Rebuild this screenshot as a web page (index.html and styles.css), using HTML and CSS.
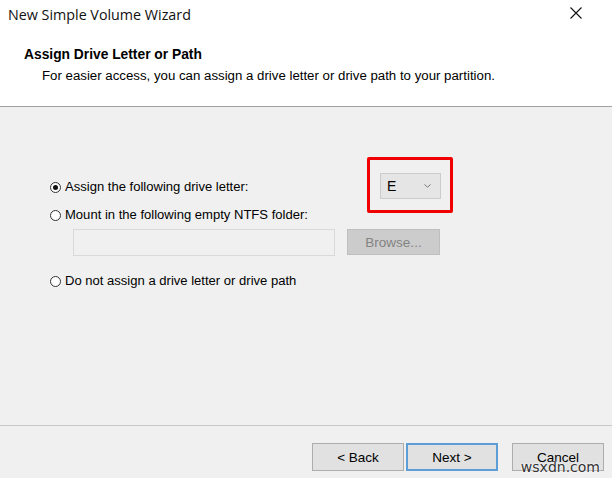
FILE: index.html
```html
<!DOCTYPE html>
<html>
<head>
<meta charset="utf-8">
<link rel="stylesheet" href="styles.css">
</head>
<body>
<div class="window">
  <div class="titlebar">
    <span class="title">New Simple Volume Wizard</span>
    <svg class="close" width="12" height="12" viewBox="0 0 12 12"><path d="M0.5 0.5 L11.5 11.5 M11.5 0.5 L0.5 11.5" stroke="#111" stroke-width="1.1" fill="none"/></svg>
  </div>
  <div class="header">
    <div class="heading">Assign Drive Letter or Path</div>
    <div class="subheading">For easier access, you can assign a drive letter or drive path to your partition.</div>
  </div>
  <div class="content">
    <div class="row row-letter">
      <label class="option"><span class="radio checked"></span>Assign the following drive letter:</label>
      <div class="combo highlighted"><span>E</span><svg width="7" height="4" viewBox="0 0 7 4"><path d="M0.5 0.5 L3.5 3.2 L6.5 0.5" stroke="#777" stroke-width="1" fill="none"/></svg></div>
    </div>
    <div class="row row-mount">
      <label class="option"><span class="radio"></span>Mount in the following empty NTFS folder:</label>
    </div>
    <div class="row row-path">
      <div class="textbox"></div>
      <button class="btn disabled">Browse...</button>
    </div>
    <div class="row row-none">
      <label class="option"><span class="radio"></span>Do not assign a drive letter or drive path</label>
    </div>
  </div>
  <div class="footer">
    <button class="btn">&lt; Back</button>
    <button class="btn default">Next &gt;</button>
    <button class="btn cancel">Cancel</button>
    <span class="watermark">wsxdn.com</span>
  </div>
</div>
</body>
</html>
```
FILE: styles.css
```css
* { box-sizing: border-box; }
html, body { margin: 0; padding: 0; }
body {
  width: 612px;
  height: 478px;
  overflow: hidden;
  font-family: "Liberation Sans", Arial, sans-serif;
  font-size: 13px;
  color: #000;
}
.window {
  width: 612px;
  height: 478px;
  display: flex;
  flex-direction: column;
  background: #f0f0f0;
  position: relative;
}
.titlebar {
  height: 30px;
  background: #fff;
  display: flex;
  align-items: center;
  justify-content: space-between;
  padding: 0 30px 0 8px;
}
.title {
  font-family: "Open Sans", "Liberation Sans", sans-serif;
  font-size: 14.3px;
  color: #111;
  margin-top: -2px;
}
.close { margin-top: -4px; }
.header {
  height: 77px;
  background: #fff;
  border-bottom: 1px solid #a0a0a0;
  padding: 17px 0 0 24px;
}
.heading {
  font-weight: bold;
  font-size: 13.8px;
  line-height: 16px;
}
.subheading {
  margin: 5px 0 0 18px;
  font-size: 13.25px;
  line-height: 16px;
}
.content {
  height: 319px;
  border-bottom: 1px solid #c8c8c8;
  padding: 66px 0 0 50px;
  display: flex;
  flex-direction: column;
}
.row { display: flex; align-items: center; }
.row-letter { height: 26px; }
.row-letter .option { margin-top: 2px; }
.row-mount { height: 16px; margin-top: 8px; }
.row-path { margin: 6px 0 0 23px; height: 27px; align-items: flex-start; }
.row-none { height: 16px; margin-top: 17px; }
.option {
  display: flex;
  align-items: center;
  font-size: 13.05px;
  line-height: 16px;
  white-space: nowrap;
}
.radio {
  width: 11px;
  height: 11px;
  border: 1px solid #333;
  border-radius: 50%;
  background: #fff;
  margin-right: 4px;
  position: relative;
}
.radio.checked::after {
  content: "";
  position: absolute;
  left: 2px;
  top: 2px;
  width: 5px;
  height: 5px;
  border-radius: 50%;
  background: #111;
}
.combo {
  margin-left: auto;
  margin-right: 171px;
  width: 61px;
  height: 26px;
  background: #e5e5e5;
  border: 1px solid #cccccc;
  display: flex;
  align-items: center;
  justify-content: space-between;
  padding: 0 9px 0 6px;
  font-size: 14px;
  position: relative;
}
/* red marker drawn around the drive letter box */
.highlighted::after {
  content: "";
  position: absolute;
  left: -14px;
  right: -13px;
  top: -17px;
  bottom: -15px;
  border: 3.5px solid #f00000;
  border-radius: 2px;
}
.textbox {
  width: 262px;
  height: 27px;
  background: #f0f0f0;
  border: 1px solid #d9d9d9;
}
.btn {
  font-family: "Liberation Sans", Arial, sans-serif;
  font-size: 13.5px;
  width: 92px;
  height: 28px;
  background: #e1e1e1;
  border: 1px solid #adadad;
  color: #000;
  padding: 0;
}
.btn.disabled {
  margin-left: 12px;
  width: 93px;
  height: 26px;
  background: #cccccc;
  border-color: #bfbfbf;
  color: #838383;
}
.btn.default {
  border: 2px solid #5e9ed6;
  margin-left: 2px;
}
.btn.cancel { margin-left: 14px; }
.footer {
  flex: 1;
  display: flex;
  justify-content: flex-end;
  align-items: flex-start;
  padding: 17px 8px 0 0;
  position: relative;
}
.watermark {
  position: absolute;
  right: 12px;
  bottom: 3px;
  font-family: "DejaVu Sans", sans-serif;
  font-size: 14px;
  color: #333;
  text-shadow: 0 0 2px #fff, 0 0 2px #fff;
}
```
